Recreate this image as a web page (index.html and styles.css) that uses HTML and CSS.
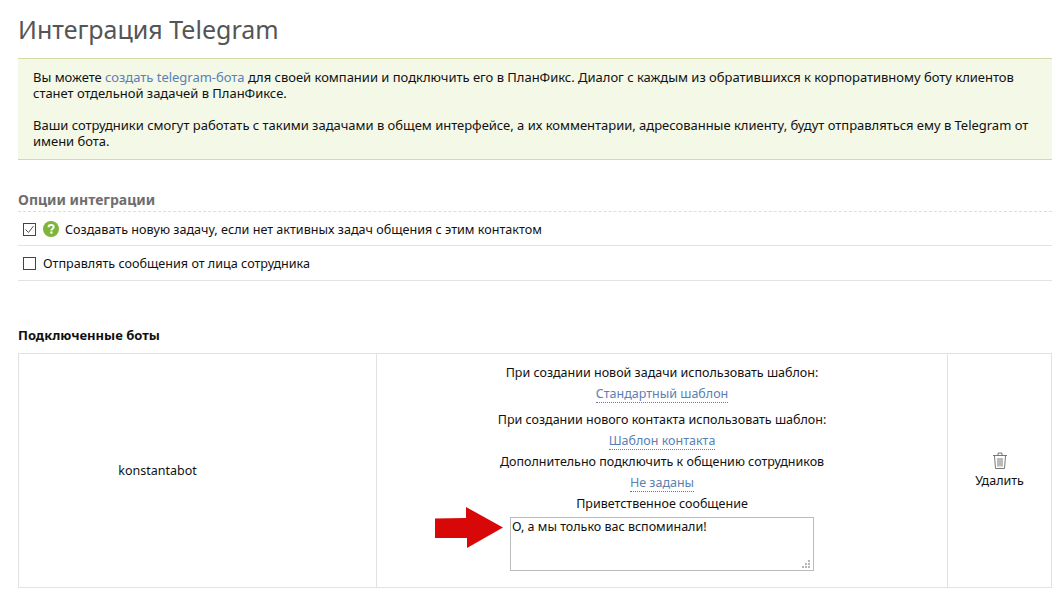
FILE: index.html
```html
<!DOCTYPE html>
<html lang="ru">
<head>
<meta charset="utf-8">
<title>Интеграция Telegram</title>
<link rel="stylesheet" href="styles.css">
</head>
<body>
<main class="page">
  <h1 class="title">Интеграция Telegram</h1>
  <div class="notice">
    <p>Вы можете <a class="link" href="#">создать telegram-бота</a> для своей компании и подключить его в ПланФикс. Диалог с каждым из обратившихся к корпоративному боту клиентов станет отдельной задачей в ПланФиксе.</p>
    <p>Ваши сотрудники смогут работать с такими задачами в общем интерфейсе, а их комментарии, адресованные клиенту, будут отправляться ему в Telegram от имени бота.</p>
  </div>
  <h2 class="options-title">Опции интеграции</h2>
  <div class="option option-first">
    <span class="check"><svg width="11" height="11" viewBox="0 0 11 11"><path d="M1.5 5.5 L4.5 8.5 L9.5 2" fill="none" stroke="#555" stroke-width="1"/></svg></span>
    <svg class="help" width="16" height="16" viewBox="0 0 16 16"><circle cx="8" cy="8" r="8" fill="#7db53a"/><path d="M5.5 6.2 C5.5 4.6 6.7 3.9 8.1 3.9 C9.6 3.9 10.7 4.8 10.7 6 C10.7 7.7 8.4 7.7 8.4 9.4" fill="none" stroke="#fff" stroke-width="2"/><rect x="7.3" y="10.5" width="2.2" height="2.2" fill="#fff"/></svg>
    <span>Создавать новую задачу, если нет активных задач общения с этим контактом</span>
  </div>
  <div class="option option-second">
    <span class="check"></span>
    <span>Отправлять сообщения от лица сотрудника</span>
  </div>
  <h3 class="bots-title">Подключенные боты</h3>
  <div class="bots">
    <div class="bot-name">konstantabot</div>
    <div class="bot-settings">
      <div class="label">При создании новой задачи использовать шаблон:</div>
      <div class="value"><a class="dotted" href="#">Стандартный шаблон</a></div>
      <div class="label label-second">При создании нового контакта использовать шаблон:</div>
      <div class="value"><a class="dotted" href="#">Шаблон контакта</a></div>
      <div class="label">Дополнительно подключить к общению сотрудников</div>
      <div class="value"><a class="dotted" href="#">Не заданы</a></div>
      <div class="label">Приветственное сообщение</div>
      <div class="message-row">
        <textarea class="message">О, а мы только вас вспоминали!</textarea>
        <svg class="grip" width="8" height="8" viewBox="0 0 8 8"><g fill="#b5b5b5"><rect x="6" y="0" width="2" height="2"/><rect x="3" y="3" width="2" height="2"/><rect x="6" y="3" width="2" height="2"/><rect x="0" y="6" width="2" height="2"/><rect x="3" y="6" width="2" height="2"/><rect x="6" y="6" width="2" height="2"/></g></svg>
        <svg class="arrow" width="68" height="42" viewBox="0 0 68 42"><path d="M0 11.5 L31 11 L31 0 L68 20.5 L32 41 L32 31 L0 31 Z" fill="#d90808"/></svg>
      </div>
    </div>
    <div class="bot-actions">
      <svg width="14" height="17" viewBox="0 0 14 17"><g fill="none" stroke="#777" stroke-width="1"><path d="M0 3.5 H14"/><path d="M5 3 V1 H9 V3"/><path d="M1.5 4 L2.5 16.5 H11.5 L12.5 4"/><path d="M5 6 V14.5 M7 6 V14.5 M9 6 V14.5"/></g></svg>
      <span>Удалить</span>
    </div>
  </div>
</main>
</body>
</html>
```
FILE: styles.css
```css
html, body { margin: 0; padding: 0; background: #fff; }
body { font-family: "Noto Sans", "Open Sans", sans-serif; font-size: 13px; color: #111; overflow: hidden; height: 604px; }
.page { padding: 0 12px 0 18px; }
.title { margin: 0; padding-top: 13px; height: 45px; font-size: 25px; line-height: 32px; font-weight: 400; color: #555; }
.notice { height: 77px; padding: 10px 15px 13px 15px; background: #f3f8e7; border-top: 1px solid #d2dcaa; border-bottom: 1px solid #d2dcaa; line-height: 16px; letter-spacing: -0.02px; }
.notice p { margin: 0 0 16px; }
.notice p:last-child { margin: 0; }
.link { color: #5a7fb5; text-decoration: none; }
.options-title { margin: 30px 0 0; height: 21px; font-size: 14px; line-height: 20px; font-weight: 700; color: #6e6e6e; border-bottom: 1px dashed #ddd; }
.option { display: flex; align-items: center; padding-left: 5px; border-bottom: 1px solid #e2e2e2; font-size: 12.6px; }
.option-first { padding-top: 1px; height: 32px; }
.option-second { height: 34px; }
.check { flex: none; box-sizing: border-box; width: 13px; height: 13px; margin-right: 7px; border: 1px solid #444; background: #fff; display: flex; }
.help { flex: none; margin-right: 6px; }
.bots-title { margin: 45px 0 0; height: 27px; font-size: 13px; line-height: 18px; font-weight: 700; color: #111; }
.bots { display: grid; grid-template-columns: 357px 572px 1fr; height: 235px; border: 1px solid #e2e2e2; box-sizing: border-box; font-size: 12.5px; }
.bot-name, .bot-actions { display: flex; align-items: center; justify-content: center; }
.bot-name { padding-right: 80px; }
.bot-settings { border-left: 1px solid #e2e2e2; border-right: 1px solid #e2e2e2; text-align: center; padding-top: 9px; }
.bot-actions { flex-direction: column; gap: 3px; padding-bottom: 1px; }
.label { line-height: 20px; }
.label-second { margin-top: 5px; height: 20px; }
.value { line-height: 21px; height: 22px; }
.dotted { color: #5a7fb5; text-decoration: none; border-bottom: 1px dotted #5a7fb5; }
.message-row { position: relative; width: 304px; margin: 3px auto 0; }
.message { display: block; box-sizing: border-box; width: 304px; height: 54px; padding: 1px; margin: 0; border: 1px solid #bbb; font: 12.5px/16px "Noto Sans", sans-serif; color: #111; outline: none; resize: none; }
.grip { position: absolute; right: 4px; bottom: 3px; }
.arrow { position: absolute; left: -75px; top: -10px; }
```
